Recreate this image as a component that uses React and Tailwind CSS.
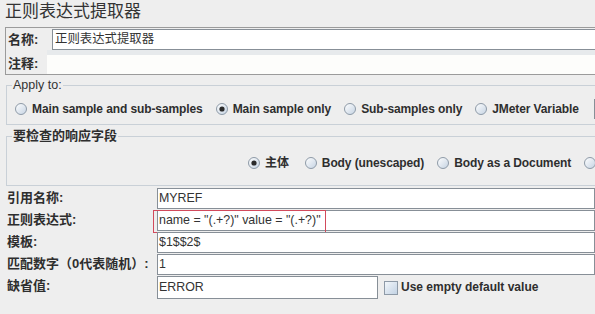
import React from "react";

function Radio({ checked }) {
  return (
    <svg width="12" height="12" viewBox="0 0 12 12" className="shrink-0">
      <defs>
        <linearGradient id="rg" x1="0" y1="0" x2="1" y2="1">
          <stop offset="0" stopColor="#ffffff" />
          <stop offset="1" stopColor="#c4d2e2" />
        </linearGradient>
      </defs>
      <circle cx="6" cy="6" r="5.5" fill="url(#rg)" stroke="#8e9aa7" />
      {checked && <circle cx="6" cy="6" r="2.6" fill="#2a2a2a" />}
    </svg>
  );
}

function RadioItem({ checked, children, cls = "" }) {
  return (
    <div className={"flex items-center gap-[5px] shrink-0 " + cls}>
      <Radio checked={checked} />
      {children && (
        <span className="font-bold text-[12px] leading-[14px] whitespace-nowrap tracking-[-0.1px]">{children}</span>
      )}
    </div>
  );
}

function Field({ children, cls = "" }) {
  return (
    <div
      className={
        "h-[21px] border border-[#878f97] bg-white pl-[1px] text-[12.4px] leading-[19px] text-[#333] whitespace-nowrap overflow-hidden " +
        cls
      }
    >
      {children}
    </div>
  );
}

function FormRow({ label, children }) {
  return (
    <div className="relative flex items-start h-[22px]">
      <div className="w-[157px] shrink-0 pl-[7px] pt-[1px] text-[13px] leading-[18px] font-bold whitespace-nowrap">
        {label}
      </div>
      {children}
    </div>
  );
}

export default function App() {
  return (
    <div className="w-[595px] h-[314px] overflow-hidden bg-[#eeeeee] text-[#2e2e2e] font-['Liberation_Sans','Noto_Sans_CJK_SC',sans-serif]">
      <div className="h-[27px] pl-[5px] text-[17px] leading-[24px] text-[#333] whitespace-nowrap">
        正则表达式提取器
      </div>

      <div className="ml-[5px] w-[700px] h-[48px] border border-[#9b9b9b]">
        <div className="flex h-[22px]">
          <div className="w-[46px] shrink-0 pl-[2px] pt-[3px] text-[13px] leading-[18px] font-bold">名称:</div>
          <Field cls="mt-[1px] flex-1 pl-[2px]">正则表达式提取器</Field>
        </div>
        <div className="flex h-[24px]">
          <div className="w-[41px] shrink-0 pl-[2px] pt-[5px] text-[13px] leading-[18px] font-bold">注释:</div>
          <div className="flex-1 flex flex-col">
            <div className="h-[5px] bg-[#e7eaec]" />
            <div className="flex-1 bg-[#fdfdfb]" />
          </div>
        </div>
      </div>

      <fieldset className="mt-[3px] ml-[6px] w-[700px] border border-[#c9d0d7] rounded-none">
        <legend className="ml-[5px] px-[1px] text-[12.5px] leading-[14px] text-[#333]">Apply to:</legend>
        <div className="pt-[8px] pb-[6px] pl-[8px] flex items-center h-[18px] gap-[13px] box-content">
          <RadioItem>Main sample and sub-samples</RadioItem>
          <RadioItem checked>Main sample only</RadioItem>
          <RadioItem>Sub-samples only</RadioItem>
          <RadioItem>JMeter Variable</RadioItem>
          <div className="ml-[2px] w-[80px] h-[20px] border border-[#878f97] bg-white shrink-0" />
        </div>
      </fieldset>

      <fieldset className="mt-[3px] ml-[6px] w-[700px] border border-[#c9d0d7] rounded-none">
        <legend className="ml-[5px] px-[1px] text-[13px] leading-[16px] font-bold">要检查的响应字段</legend>
        <div className="pt-[10px] pb-[13px] pl-[241px] flex items-center h-[18px] gap-[13px] box-content">
          <RadioItem checked cls="mr-[3px]">主体</RadioItem>
          <RadioItem>Body (unescaped)</RadioItem>
          <RadioItem>Body as a Document</RadioItem>
          <RadioItem />
        </div>
      </fieldset>

      <div className="mt-[2px] flex flex-col">
        <FormRow label="引用名称:">
          <Field cls="flex-1">MYREF</Field>
        </FormRow>
        <FormRow label="正则表达式:">
          <Field cls="flex-1">name = "(.+?)" value = "(.+?)"</Field>
          <div className="absolute left-[153px] top-0 w-[173px] h-[23px] border border-[#d24a5c]" />
        </FormRow>
        <FormRow label="模板:">
          <Field cls="flex-1">$1$$2$</Field>
        </FormRow>
        <FormRow label="匹配数字（0代表随机）:">
          <Field cls="flex-1">1</Field>
        </FormRow>
        <FormRow label="缺省值:">
          <Field cls="w-[221px] h-[23px] leading-[21px]">ERROR</Field>
          <div className="ml-[6px] mt-[5px] w-[14px] h-[14px] border border-[#8e9aa7] bg-gradient-to-br from-[#f2f6fa] to-[#c3d3e4] shrink-0" />
          <div className="ml-[3px] mt-[4px] font-bold text-[12px] leading-[14px] whitespace-nowrap">Use empty default value</div>
        </FormRow>
      </div>
    </div>
  );
}
